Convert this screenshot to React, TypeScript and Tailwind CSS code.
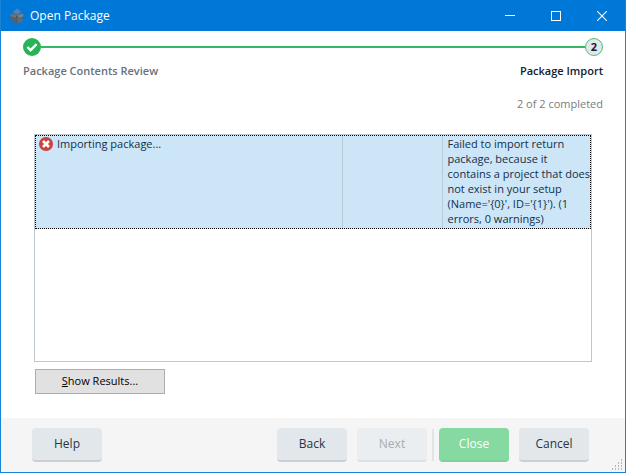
import type { ReactNode } from "react";

const resultMessage =
  "Failed to import return package, because it contains a project that does not exist in your setup (Name='{0}', ID='{1}'). (1 errors, 0 warnings)";

const WizardButton = ({
  children,
  className = "border-[#c9cfd4] bg-[#e1e7eb] text-[#24364a]",
  disabled = false,
}: {
  children: ReactNode;
  className?: string;
  disabled?: boolean;
}) => (
  <button
    type="button"
    disabled={disabled}
    className={`h-[34px] w-[70px] rounded-[4px] border-b-2 text-center ${className}`}
  >
    {children}
  </button>
);

const PackageIcon = () => (
  <svg viewBox="0 0 16 16" className="h-4 w-4" aria-hidden="true">
    <path d="M8 0.5l4 3.5-1 4H5L4 4z" fill="#4a7096" />
    <path d="M8 0.5L4 4l4 2 4-2z" fill="#5484b5" />
    <path d="M2.5 6L8 8v7.500l-5.500-2z" fill="#56616c" />
    <path d="M13.500 6L8 8v7.500l5.500-2z" fill="#636d77" />
    <path d="M2.500 5.500L8 8l-2 2.500-5-2z" fill="#6b7680" />
    <path d="M13.500 5.500L8 8l2 2.500 5-2z" fill="#77828c" />
    <path d="M8 8v7.500M1 8.500l5 2L8 8l2 2.500 5-2" fill="none" stroke="#414d59" strokeWidth="0.5" />
  </svg>
);

const TitleBar = () => (
  <header className="flex h-[31px] items-center justify-between bg-[#0078d7] pl-2 text-white">
    <div className="flex items-center gap-[5px]">
      <PackageIcon />
      <h1>Open Package</h1>
    </div>
    <div className="flex h-full">
      <button type="button" aria-label="Minimize" className="flex w-[46px] items-center justify-center">
        <svg viewBox="0 0 10 10" className="h-[10px] w-[10px]">
          <path d="M0 4.5h10" stroke="#fff" />
        </svg>
      </button>
      <button type="button" aria-label="Maximize" className="flex w-[46px] items-center justify-center">
        <svg viewBox="0 0 10 10" className="h-[10px] w-[10px]">
          <rect x="0.5" y="0.5" width="9" height="9" fill="none" stroke="#fff" />
        </svg>
      </button>
      <button type="button" aria-label="Close window" className="flex w-[46px] items-center justify-center">
        <svg viewBox="0 0 10 10" className="h-[10px] w-[10px]">
          <path d="M0 0l10 10M10 0L0 10" stroke="#fff" strokeWidth="1.1" />
        </svg>
      </button>
    </div>
  </header>
);

const Steps = () => (
  <div className="px-[22px] pt-[7px]">
    <div className="flex items-center">
      <svg viewBox="0 0 18 18" className="h-[18px] w-[18px]" aria-hidden="true">
        <circle cx="9" cy="9" r="9" fill="#26b457" />
        <path d="M4.4 9l3.200 3.200 6-6" fill="none" stroke="#fff" strokeWidth="2.4" />
      </svg>
      <div className="h-[2px] flex-1 bg-[#35b863]" />
      <div className="flex h-[18px] w-[18px] items-center justify-center rounded-full border border-[#4fc078] bg-[#e1e7eb] text-[11px] leading-4 font-bold text-[#14202e]">
        2
      </div>
    </div>
    <div className="mt-[7px] flex justify-between text-[11px] leading-4 font-semibold">
      <span className="text-[#66727f]">Package Contents Review</span>
      <span className="text-[#14202e]">Package Import</span>
    </div>
    <p className="mt-[17px] text-right text-[11px] leading-4 text-[#7b7b7b]">2 of 2 completed</p>
  </div>
);

const ErrorIcon = () => (
  <svg viewBox="0 0 14 14" className="h-[14px] w-[14px] shrink-0" role="img" aria-label="Error">
    <circle cx="7" cy="7" r="7" fill="#c9423c" />
    <path d="M4 4l6 6M10 4l-6 6" stroke="#fff" strokeWidth="2.6" />
  </svg>
);

const Results = () => (
  <div className="mx-[33px] mt-[22px] flex-1 border border-[#bfc7ce]">
    <table className="w-full table-fixed border-collapse text-[11px] leading-[15px] text-[#12304a]">
      <colgroup>
        <col />
        <col className="w-[100px]" />
        <col className="w-[149px]" />
      </colgroup>
      <tbody>
        <tr className="h-[94px] bg-[#cce5f7] align-top outline-1 -outline-offset-1 outline-black outline-dotted">
          <td className="border-r border-[#b4cddd] pt-px pl-1">
            <div className="flex items-center gap-1">
              <ErrorIcon />
              Importing package...
            </div>
          </td>
          <td className="border-r border-[#b4cddd]" />
          <td className="pt-px pl-[5px]">{resultMessage}</td>
        </tr>
      </tbody>
    </table>
  </div>
);

const Footer = () => (
  <footer className="relative flex h-[54px] items-center justify-between bg-[#f5f5f5] pr-9 pl-[31px]">
    <WizardButton>Help</WizardButton>
    <div className="flex items-center">
      <WizardButton>Back</WizardButton>
      <div className="ml-[10px] flex items-center gap-[5px]">
        <WizardButton disabled className="border-[#dde0e2] bg-[#ebeef0] text-[#a6abb0]">
          Next
        </WizardButton>
        <div className="h-8 w-[2px] bg-[#dfe5e9]" />
        <WizardButton className="border-[#7fd09a] bg-[#86d9a1] text-white">Close</WizardButton>
      </div>
      <div className="ml-[10px] flex">
        <WizardButton>Cancel</WizardButton>
      </div>
    </div>
    <svg viewBox="0 0 11 11" className="absolute right-[2px] bottom-[2px] h-[11px] w-[11px]" aria-hidden="true">
      <path
        d="M9 0h1v2h-1zM9 3h1v2h-1zM6 3h1v2h-1zM9 6h1v2h-1zM6 6h1v2h-1zM3 6h1v2h-1zM9 9h1v2h-1zM6 9h1v2h-1zM3 9h1v2h-1zM0 9h1v2h-1z"
        fill="#b4b8c4"
      />
    </svg>
  </footer>
);

const App = () => {
  return (
    <main className="flex min-h-screen flex-col border-x border-b border-[#1883d7] bg-white font-['Open_Sans','Noto_Sans',sans-serif] text-xs">
      <TitleBar />
      <Steps />
      <Results />
      <div className="px-[34px] pt-[7px] pb-6">
        <button
          type="button"
          className="h-[25px] w-[130px] border border-[#adadad] bg-[#e1e1e1] text-center text-[11px] text-black"
        >
          <span className="underline">S</span>how Results...
        </button>
      </div>
      <Footer />
    </main>
  );
};

export default App;
